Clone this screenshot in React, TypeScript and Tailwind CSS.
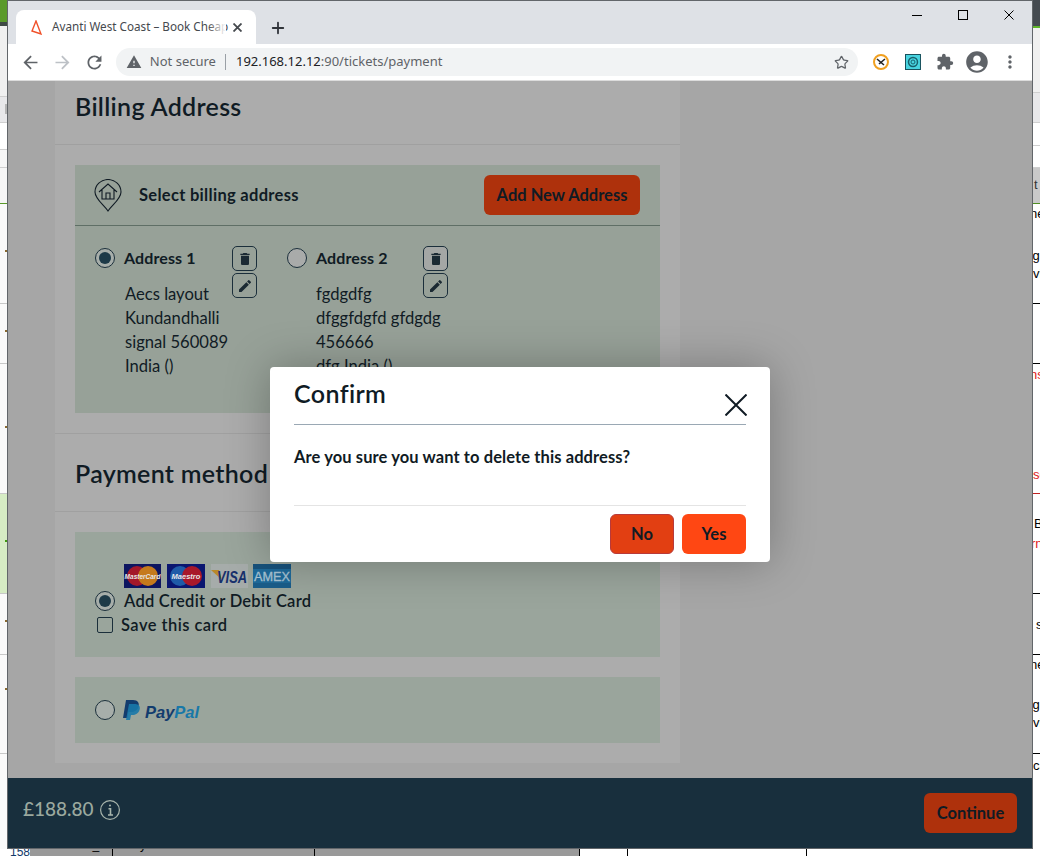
import React from 'react';
import { Plus, Star } from 'lucide-react';
import {
  MdAccountCircle,
  MdArrowBack,
  MdArrowForward,
  MdDelete,
  MdEdit,
  MdExtension,
  MdMoreVert,
  MdRefresh,
  MdWarning,
} from 'react-icons/md';

const brand = { fontFamily: 'Lato, "Noto Sans", sans-serif' };
const chromeFont = { fontFamily: '"Noto Sans", "Open Sans", sans-serif' };
const sheetFont = { fontFamily: '"Liberation Sans", sans-serif' };

const leftRows = [
  { h: 'h-[22px]', c: 'bg-[#5a9a2a]', tick: '' },
  { h: 'h-[4px]', c: 'bg-[#3f4a45]', tick: '' },
  { h: 'h-[70px]', c: 'bg-[#f0f0f0]', tick: '' },
  { h: 'h-[26px]', c: 'bg-[#e8e8ea] border-t border-[#cfcfcf]', tick: 'mt-[7px] h-[10px] w-[2px] bg-[#b5b5b5]' },
  { h: 'h-[27px]', c: 'bg-white border-t border-[#cfcfcf]', tick: '' },
  { h: 'h-[18px]', c: 'bg-[#f6f6f6] border-t border-[#cfcfcf]', tick: '' },
  { h: 'h-[36px]', c: 'bg-[#f6f6f6] border-t border-[#cfcfcf]', tick: '' },
  { h: 'h-[100px]', c: 'bg-[#fafafa] border-t border-[#5a9a2a]', tick: 'mt-[46px] h-[2px] w-[2px] bg-[#8a6a30]' },
  { h: 'h-[60px]', c: 'bg-[#fafafa] border-t border-[#c8c8c8]', tick: 'mt-[26px] h-[2px] w-[2px] bg-[#8a6a30]' },
  { h: 'h-[130px]', c: 'bg-[#fafafa] border-t border-[#c8c8c8]', tick: 'mt-[62px] h-[2px] w-[2px] bg-[#8a6a30]' },
  { h: 'h-[100px]', c: 'bg-[#d6ecc4] border-t border-[#c8c8c8]', tick: 'mt-[46px] h-[2px] w-[2px] bg-[#3f9a10]' },
  { h: 'h-[61px]', c: 'bg-[#fafafa] border-t border-[#c8c8c8]', tick: 'mt-[26px] h-[2px] w-[2px] bg-[#8a6a30]' },
  { h: 'h-[99px]', c: 'bg-[#fafafa] border-t border-[#c8c8c8]', tick: 'mt-[33px] h-[2px] w-[2px] bg-[#8a6a30]' },
  { h: 'h-[103px]', c: 'bg-[#fafafa] border-t border-[#c8c8c8]', tick: '' },
];

const rightRows: { h: string; c: string; lines?: { t: string; k: string }[] }[] = [
  { h: 'h-[26px]', c: 'bg-[#444a50]' },
  { h: 'h-[66px]', c: 'bg-[#f0f0f0] border-t-2 border-[#5fb52a]' },
  { h: 'h-[30px]', c: 'bg-[#e8e8ea] border-t border-[#cfcfcf]' },
  { h: 'h-[23px]', c: 'bg-white border-t border-[#cfcfcf]' },
  { h: 'h-[22px]', c: 'bg-white border-t border-[#cfcfcf]' },
  { h: 'h-[36px]', c: 'bg-[#c9c9c9] border-t border-[#cfcfcf]', lines: [{ t: 't', k: 'mt-[9px] ml-[1px] text-[#333]' }] },
  {
    h: 'h-[100px]',
    c: 'bg-white border-t border-[#4f8f20]',
    lines: [
      { t: 'ne', k: 'mt-[2px] -ml-[3px] text-black' },
      { t: 'sg', k: 'mt-[26px] -ml-[7px] text-black' },
      { t: 'vi', k: 'mt-[2px] text-black' },
    ],
  },
  { h: 'h-[60px]', c: 'bg-white border-t border-black' },
  {
    h: 'h-[130px]',
    c: 'bg-white border-t border-black',
    lines: [
      { t: 'ns', k: 'mt-[3px] -ml-[3px] text-[#e02020]' },
      { t: 'se', k: 'mt-[84px] text-[#e02020]' },
    ],
  },
  {
    h: 'h-[100px]',
    c: 'bg-white border-t border-[#c02020]',
    lines: [
      { t: 'B', k: 'mt-[22px] ml-[1px] text-black' },
      { t: 'rn', k: 'mt-[4px] -ml-[2px] text-[#e02020]' },
    ],
  },
  { h: 'h-[61px]', c: 'bg-white border-t border-black', lines: [{ t: 's', k: 'mt-[23px] ml-[3px] text-black' }] },
  {
    h: 'h-[99px]',
    c: 'bg-white border-t border-black',
    lines: [
      { t: 'ne', k: 'mt-[2px] -ml-[3px] text-black' },
      { t: 'sg', k: 'mt-[24px] -ml-[7px] text-black' },
      { t: 'vi', k: 'mt-[2px] text-black' },
    ],
  },
  { h: 'h-[103px]', c: 'bg-white border-t border-black', lines: [{ t: 'ca', k: 'mt-[4px] text-black' }] },
];

function Radio({ checked, muted }: { checked?: boolean; muted?: boolean }) {
  return (
    <span
      className={`flex w-5 h-5 shrink-0 items-center justify-center rounded-full border border-[#1b2f3b] ${
        muted ? 'bg-[#a9abaa]' : 'bg-[#a7aeaa]'
      }`}
    >
      {checked && <span className="w-3 h-3 rounded-full bg-[#1d3a48]" />}
    </span>
  );
}

function IconButton({ children, muted }: { children: React.ReactNode; muted?: boolean }) {
  return (
    <span
      className={`flex w-[25px] h-[25px] items-center justify-center rounded-[5px] border border-[#1b2f3b] text-[#1b2a33] ${
        muted ? 'bg-[#a4a7a5]' : ''
      }`}
    >
      {children}
    </span>
  );
}

function AddressColumn({
  name,
  lines,
  checked,
  muted,
  textClass,
  bodyClass,
}: {
  name: string;
  lines: string[];
  checked?: boolean;
  muted?: boolean;
  textClass: string;
  bodyClass: string;
}) {
  return (
    <div className="flex w-[192px]">
      <div className={textClass}>
        <div className="flex items-center gap-[9px] h-5 mt-[2px]">
          <Radio checked={checked} muted={muted} />
          <span className="text-[16px] font-bold tracking-[0.1px] text-[#101b24]">{name}</span>
        </div>
        <div className={`${bodyClass} mt-[14px] text-[16.6px] leading-[24px] text-[#101b24]`}>
          {lines.map((line) => (
            <div key={line} className="whitespace-nowrap">
              {line}
            </div>
          ))}
        </div>
      </div>
      <div className="flex flex-col gap-[2px]">
        <IconButton muted={muted}>
          <MdDelete size={16} />
        </IconButton>
        <IconButton>
          <MdEdit size={16} />
        </IconButton>
      </div>
    </div>
  );
}

function CardLogos() {
  return (
    <div className="flex items-center gap-[6px] h-6">
      <svg width="37" height="24" viewBox="0 0 37 24">
        <rect width="37" height="24" fill="#0d1560" />
        <circle cx="13" cy="12" r="10" fill="#a3172a" />
        <circle cx="24" cy="12" r="10" fill="#c57a1c" />
        <text x="18.5" y="14.5" textAnchor="middle" fontSize="6.5" fontWeight="700" fontStyle="italic" fill="#e8e8e8" fontFamily="Liberation Sans">
          MasterCard
        </text>
      </svg>
      <svg width="38" height="24" viewBox="0 0 38 24">
        <rect width="38" height="24" fill="#0a1670" />
        <circle cx="13" cy="12" r="10" fill="#1f5ba8" />
        <circle cx="25" cy="12" r="10" fill="#a8182a" />
        <text x="19" y="14.5" textAnchor="middle" fontSize="7.5" fontWeight="700" fontStyle="italic" fill="#e8e8e8" fontFamily="Liberation Sans">
          Maestro
        </text>
      </svg>
      <svg width="37" height="24" viewBox="0 0 37 24">
        <rect width="37" height="24" fill="#a6acaa" />
        <path d="M0 6 L8 6 L11 16 Z" fill="#b8882a" />
        <text x="6" y="18.5" fontSize="17" fontWeight="700" fontStyle="italic" fill="#17306c" fontFamily="Liberation Sans" textLength="30" lengthAdjust="spacingAndGlyphs">
          VISA
        </text>
      </svg>
      <svg width="38" height="24" viewBox="0 0 38 24" className="-ml-[1px]">
        <rect width="38" height="24" fill="#1e6a9a" />
        <rect y="0" width="38" height="5" fill="#17527c" />
        <rect y="19" width="38" height="5" fill="#1a5d8a" />
        <text x="1" y="16.5" fontSize="12.5" fill="#a9c4d4" stroke="#a9c4d4" strokeWidth="0.3" fontFamily="Liberation Sans" textLength="36" lengthAdjust="spacingAndGlyphs">
          AMEX
        </text>
      </svg>
    </div>
  );
}

function PayPalLogo() {
  return (
    <div className="flex items-center gap-[5px]">
      <svg width="17" height="20" viewBox="0 0 17 20">
        <path d="M3 0 H10 C15 0 16.5 3 15.5 6.5 C14.5 10.5 11.5 12 8 12 H5.5 L4.5 18 H0 Z" fill="#123c6e" />
        <path d="M6 4 H12.5 C16.5 4.5 17.5 7 16.5 10 C15.5 13.5 12.5 15 9.5 15 H8 L7 20 H3 Z" fill="#1878a8" opacity="0.9" />
      </svg>
      <span className="text-[16.5px] font-bold italic leading-none mt-1" style={sheetFont}>
        <span className="text-[#123c6e]">Pay</span>
        <span className="text-[#1878a8]">Pal</span>
      </span>
    </div>
  );
}

function Favicon() {
  return (
    <svg width="11" height="15" viewBox="0 0 11 15" fill="none" stroke="#f0512a" strokeWidth="1.4">
      <path d="M5 1 L1 11 L10 14 Z" />
    </svg>
  );
}

function Cross({ size, stroke, className }: { size: number; stroke: number; className?: string }) {
  return (
    <svg width={size} height={size} viewBox={`0 0 ${size} ${size}`} className={className} fill="none" stroke="currentColor" strokeWidth={stroke}>
      <path d={`M0.5 0.5 L${size - 0.5} ${size - 0.5} M${size - 0.5} 0.5 L0.5 ${size - 0.5}`} />
    </svg>
  );
}

function ChromeBar() {
  return (
    <div style={chromeFont}>
      <div className="flex h-[43px] bg-[#dee1e6] items-end pl-2">
        <div className="flex items-center w-[240px] h-[34px] bg-white rounded-t-[8px] pl-[15px] pr-[10px]">
          <Favicon />
          <div className="relative ml-[10px] w-[174px] text-[11.7px] text-[#45494e] whitespace-nowrap">
            Avanti West Coast – Book Cheap
            <span className="absolute right-0 top-0 w-[18px] h-full bg-gradient-to-r from-transparent to-white" />
          </div>
          <Cross size={9} stroke={1.8} className="ml-[7px] text-[#45494e]" />
        </div>
        <Plus size={18} strokeWidth={2.4} className="ml-[13px] mb-[7px] text-[#30343a]" />
        <div className="ml-auto flex h-[28px] items-center self-start pr-[18px] text-black">
          <span className="w-[10px] h-px bg-black mr-[36px]" />
          <span className="w-[10px] h-[10px] border border-black mr-[36px]" />
          <Cross size={10} stroke={1} />
        </div>
      </div>
      <div className="flex h-[37px] items-center bg-white border-b border-[#dcdcdc] pl-[12px] pr-[12px]">
        <MdArrowBack size={21} className="text-[#5f6368]" />
        <MdArrowForward size={21} className="ml-[11px] text-[#bdc1c6]" />
        <MdRefresh size={21} className="ml-[11px] text-[#5f6368]" />
        <div className="flex items-center ml-[11px] w-[744px] h-[28px] rounded-full bg-[#f1f3f4] pl-[10px] pr-[9px]">
          <MdWarning size={16} className="text-[#5f6368]" />
          <span className="ml-[8px] text-[13px] text-[#5f6368]">Not secure</span>
          <span className="ml-[9px] w-px h-[16px] bg-[#9aa0a6]" />
          <span className="ml-[10px] text-[13px] text-[#202124]">192.168.12.12</span>
          <span className="text-[13px] text-[#5f6368]">:90/tickets/payment</span>
          <Star size={15} strokeWidth={2} className="ml-auto text-[#5f6368]" />
        </div>
        <svg width="16" height="16" viewBox="0 0 16 16" className="ml-[15px]">
          <circle cx="8" cy="8" r="7" fill="#fff" stroke="#f0a020" strokeWidth="2" />
          <path d="M4 5 L11 11 M12 5 L6 10" stroke="#222" strokeWidth="1.6" />
        </svg>
        <svg width="16" height="16" viewBox="0 0 16 16" className="ml-[16px]">
          <rect x="0.5" y="0.5" width="15" height="15" fill="#48d4e0" stroke="#17505c" />
          <circle cx="8" cy="8" r="4.5" fill="none" stroke="#17606c" strokeWidth="1.5" />
          <circle cx="8" cy="8" r="2" fill="none" stroke="#17606c" />
        </svg>
        <MdExtension size={18} className="ml-[15px] text-[#5f6368]" />
        <MdAccountCircle size={26} className="ml-[10px] text-[#5f6368]" />
        <MdMoreVert size={20} className="ml-[10px] text-[#5f6368]" />
      </div>
    </div>
  );
}

function Dialog() {
  return (
    <div
      className="absolute left-[270px] top-[367px] w-[500px] h-[195px] bg-white rounded-[4px] px-6 shadow-[0_0_45px_rgba(0,0,0,0.28)]"
      style={brand}
    >
      <div className="flex justify-between h-[58px] border-b border-[#9aa8b4]">
        <h2 className="text-[25px] font-semibold tracking-[0.4px] leading-none mt-[14px] text-[#101b24]">Confirm</h2>
        <Cross size={22} stroke={2} className="mt-[27px] -mr-[1px] text-[#101b24]" />
      </div>
      <p className="mt-[22px] text-[16.5px] font-bold tracking-[0.1px] leading-[20px] text-[#101b24] h-[58px]">Are you sure you want to delete this address?</p>
      <div className="flex justify-end gap-2 border-t border-[#e4e4e4] pt-2">
        <button className="w-16 h-10 rounded-[6px] bg-[#e23f12] border border-[#b83a3a] text-[16.5px] font-bold text-[#101b24]">No</button>
        <button className="w-16 h-10 rounded-[6px] bg-[#ff4713] text-[16.5px] font-bold text-[#101b24]">Yes</button>
      </div>
    </div>
  );
}

export default function App() {
  return (
    <div className="relative w-[1040px] h-[856px] overflow-hidden bg-white">
      <div className="flex h-[849px]">
        {/* sheet showing behind the browser window */}
        <div className="w-[7px] shrink-0 overflow-hidden">
          {leftRows.map((row, i) => (
            <div key={i} className={`${row.h} ${row.c} overflow-hidden`}>
              {row.tick && <div className={`ml-[5px] ${row.tick}`} />}
            </div>
          ))}
        </div>
        <div className="flex flex-col w-[1026px] shrink-0 border-t border-x border-[#62666a] border-b bg-[#a6a6a6]">
          <ChromeBar />
          <main className="flex-1 min-h-0 pl-[47px]" style={brand}>
            <div className="w-[625px] bg-[#acacac] text-[#101b24]">
              <div className="h-[64px] pl-[20px] pt-[10px] border-b border-[#a0a0a0]">
                <h1 className="text-[25px] font-semibold tracking-[0.3px] leading-[30px]">Billing Address</h1>
              </div>
              <div className="p-5 border-b border-[#a0a0a0]">
                <div className="h-[248px] bg-[#97a198]">
                  <div className="flex items-center h-[61px] pl-[19px] pr-5 border-b border-[#5f6f66]">
                    <svg width="28" height="33" viewBox="0 0 28 33" fill="none" stroke="#101b24" strokeWidth="1.1">
                      <path d="M14 32 C10 26 1 20 1 13 A13 12.5 0 0 1 27 13 C27 20 18 26 14 32 Z" />
                      <path d="M5 13 L14 5 L23 13 M8 11 V20 H20 V11 M12 20 V14 H16 V20" />
                    </svg>
                    <span className="ml-[17px] text-[16.5px] font-bold tracking-[0.3px]">Select billing address</span>
                    <button className="ml-auto w-[156px] h-10 rounded-[6px] bg-[#ae310c] text-[16.5px] font-bold text-[#101b24]">Add New Address</button>
                  </div>
                  <div className="flex pl-5 pt-5">
                    <AddressColumn name="Address 1" checked textClass="w-[137px]" bodyClass="pl-[30px]" lines={['Aecs layout', 'Kundandhalli', 'signal 560089', 'India ()']} />
                    <AddressColumn name="Address 2" muted textClass="w-[136px]" bodyClass="pl-[29px]" lines={['fgdgdfg', 'dfggfdgfd gfdgdg', '456666', 'dfg India ()']} />
                  </div>
                </div>
              </div>
              <div className="h-[78px] pl-[20px] pt-[24px] border-b border-[#a0a0a0]">
                <h2 className="text-[25px] font-semibold tracking-[0.3px] leading-[30px]">Payment method</h2>
              </div>
              <div className="p-5 flex flex-col gap-5">
                <div className="h-[125px] bg-[#9aa59c] pl-5 pt-[32px]">
                  <div className="pl-[29px]">
                    <CardLogos />
                  </div>
                  <div className="flex items-center gap-[9px] mt-[3px] h-5">
                    <Radio checked />
                    <span className="text-[16.5px] font-semibold tracking-[0.25px] leading-5">Add Credit or Debit Card</span>
                  </div>
                  <div className="flex items-center gap-2 mt-1 pl-[2px] h-5">
                    <span className="w-4 h-4 rounded-[2px] border border-[#1b2f3b]" />
                    <span className="text-[16.5px] font-semibold tracking-[0.45px] leading-5">Save this card</span>
                  </div>
                </div>
                <div className="flex items-center gap-2 h-[66px] bg-[#9aa59c] pl-5">
                  <Radio />
                  <PayPalLogo />
                </div>
              </div>
            </div>
          </main>
          <footer className="flex items-center justify-between h-[70px] shrink-0 bg-[#182f3d] pl-[15px] pr-[15px]" style={brand}>
            <div className="flex items-center gap-[6px] text-[#9ba99f]">
              <span className="text-[19px] font-medium leading-none -mt-[10px]">£188.80</span>
              <svg width="20" height="20" viewBox="0 0 20 20" fill="none" stroke="#a8b5ac" strokeWidth="1.2" className="-mt-[6px]">
                <circle cx="10" cy="10" r="9.4" />
                <path d="M8.5 8.8 H10.5 V15 M8 15 H13" strokeWidth="1.6" />
                <circle cx="10" cy="5.6" r="1" fill="#a8b5ac" stroke="none" />
              </svg>
            </div>
            <button className="w-[93px] h-10 rounded-[6px] bg-[#ae310c] text-[16.5px] font-bold text-[#101b24]">Continue</button>
          </footer>
        </div>
        <div className="flex-1 overflow-hidden text-[13px] leading-[16px]" style={sheetFont}>
          {rightRows.map((row, i) => (
            <div key={i} className={`${row.h} ${row.c} overflow-hidden whitespace-nowrap`}>
              {row.lines?.map((line, j) => (
                <div key={j} className={line.k}>
                  {line.t}
                </div>
              ))}
            </div>
          ))}
        </div>
      </div>
      <div className="flex h-[7px] overflow-hidden bg-white text-[12px] leading-[14px] text-black" style={sheetFont}>
        <div className="w-[30px] pl-[10px] -mt-[4px] text-[#123a6a]">158</div>
        <div className="w-[83px] bg-[#999] border-r border-black pl-[20px]">
          <div className="-mt-[11px] whitespace-nowrap">Validate_id</div>
        </div>
        <div className="w-[202px] bg-[#999] border-r border-black pl-[3px] overflow-hidden">
          <div className="-mt-[11px] whitespace-nowrap">Verify the view of card detail</div>
        </div>
        <div className="w-[265px] bg-[#999] border-r border-black" />
        <div className="w-[48px] border-r border-black" />
        <div className="w-[179px] border-r border-black" />
      </div>
      <Dialog />
    </div>
  );
}
